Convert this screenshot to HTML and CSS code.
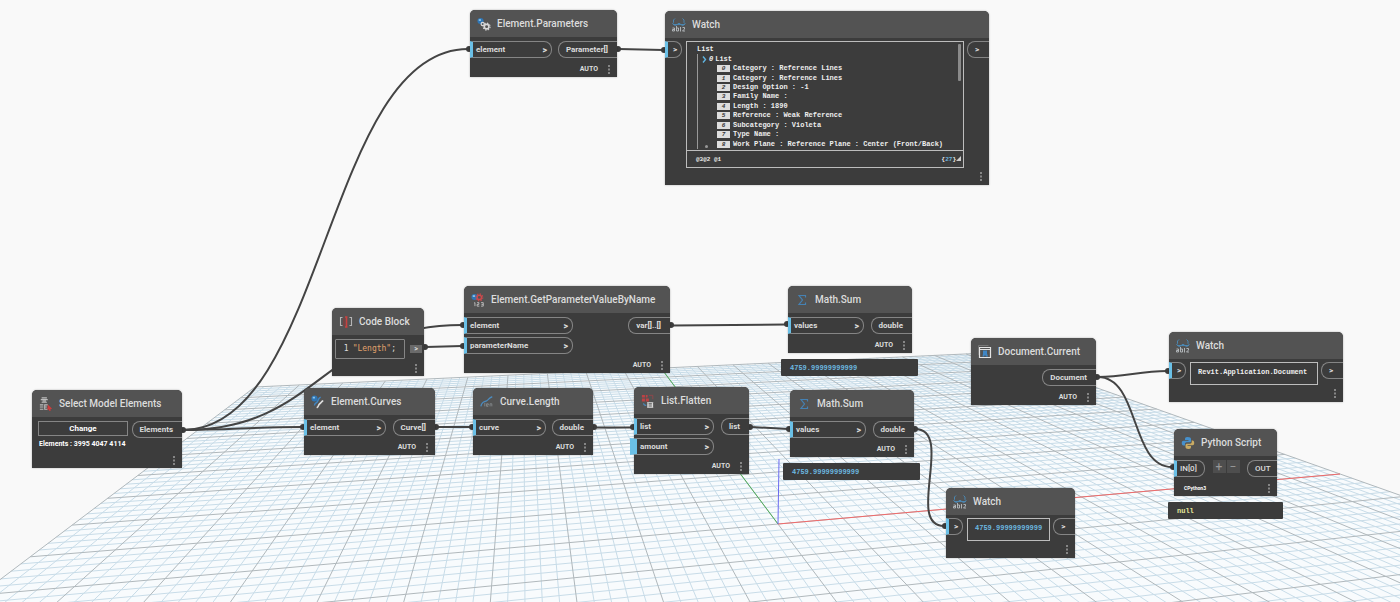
FILE: index.html
```html
<!DOCTYPE html>
<html lang="en">
<head>
<meta charset="utf-8">
<title>Graph workspace</title>
<link rel="stylesheet" href="styles.css">
</head>
<body>
<svg class="defs" aria-hidden="true">
  <symbol id="dots" viewBox="0 0 2 9"><path d="M.5 0h1v2h-1zM.5 3.500h1v2h-1zM.5 7h1v2h-1z" fill="#d0d0d0"/></symbol>
  <symbol id="watch-icon" viewBox="0 0 14 14">
    <g fill="none" stroke="#4b86b0" stroke-width="1"><path d="M3 .5 1.500 2v2.500L.5 6M10.500.5 12 2v2.500L13.500 6M1 6.500h12M2 7q2.500 1.500 4-1.500h2q1.500 3 4 1.500"/></g>
    <g fill="none" stroke="#b9bec2" stroke-width=".9"><path d="M.5 10h2v3h-2v-1.500h2M4.500 8v5h2v-3h-2M8.500 9v4.500M10.500 9.500h2v1.500l-2 2h2.500"/></g>
  </symbol>
  <symbol id="sum-icon" viewBox="0 0 14 14"><path d="M10.500 4.500V2.500H4l3.500 4.500L4 11.500h6.500v-2" fill="none" stroke="#4581b3" stroke-width="1.200"/></symbol>
</svg>
<main class="workspace">
  <svg class="scene" aria-hidden="true">
    <path id="floor" class="floor"/>
    <path id="minor" class="minor"/>
    <path id="major" class="major"/>
    <path class="axis-x" d="M778 524 1340 474"/>
    <path class="axis-y" d="M778 524 661 368"/>
    <path class="axis-z" d="M778 524 779 459"/>
    <g class="wires">
      <path d="M183 430C325 430 326 49 468 49"/>
      <path d="M183 430C322 430 322 325 462 325"/>
      <path d="M183 430C230 430 250 427 302 427"/>
      <path d="M426 347 462 346M619 49 663 50M672 325.500 786 324.500M437 427h34M595 427.500h37M751 427 788 429"/>
      <path d="M915 429C955 429 905 526 944 526"/>
      <path d="M1098 377C1125 377 1140 371 1167 371"/>
      <path d="M1098 377C1140 377 1130 467 1172 467"/>
    </g>
    <g class="ends">
      <circle cx="183" cy="430" r="3"/><circle cx="469" cy="49" r="3"/><circle cx="618" cy="49" r="3"/><circle cx="664" cy="50" r="3"/>
      <circle cx="303" cy="427" r="3"/><circle cx="436" cy="427" r="3"/><circle cx="472" cy="427" r="3"/><circle cx="594" cy="427" r="3"/>
      <circle cx="633" cy="427" r="3"/><circle cx="750" cy="427" r="3"/><circle cx="789" cy="429" r="3"/><circle cx="915" cy="429" r="3"/>
      <circle cx="945" cy="526" r="3"/><circle cx="425" cy="347" r="3"/><circle cx="463" cy="325" r="3"/><circle cx="463" cy="346" r="3"/>
      <circle cx="671" cy="325" r="3"/><circle cx="787" cy="324" r="3"/><circle cx="1097" cy="377" r="3"/><circle cx="1168" cy="371" r="3"/><circle cx="1173" cy="467" r="3"/>
    </g>
  </svg>

  <section class="item at-params">
    <div class="node">
      <header class="head"><svg class="icon" viewBox="0 0 16 16"><circle cx="4" cy="4.500" r="3.500" fill="#2f76b5"/><path d="M2 2.500h2.500v2H2z" fill="#8cc4ea"/><circle cx="6.500" cy="8" r="1.800" fill="none" stroke="#d8d8d8" stroke-width="1.400"/><circle cx="11" cy="11" r="2.600" fill="none" stroke="#d8d8d8" stroke-width="1.800"/><circle cx="11" cy="11" r="4" fill="none" stroke="#d8d8d8" stroke-width="1.200" stroke-dasharray="1.600 1.540"/></svg><h2>Element.Parameters</h2></header>
      <div class="ports"><div class="ins"><div class="in"><span>element</span><b>&gt;</b></div></div><div class="out">Parameter[]</div></div>
      <footer class="foot"><span>AUTO</span><button class="more" aria-label="Node menu"><svg><use href="#dots"/></svg></button></footer>
    </div>
  </section>

  <section class="item at-watch-list">
    <div class="node">
      <header class="head"><svg class="icon"><use href="#watch-icon"/></svg><h2>Watch</h2></header>
      <div class="ports watching"><div class="in stub"><b>&gt;</b></div>
        <div class="box tree">
          <div class="rows">
            <div>List</div>
            <div class="sub"><svg class="chev" viewBox="0 0 5 7"><path d="M1 .5l2.500 3-2.500 3" fill="none" stroke="#5fb4e0" stroke-width="1.400"/></svg><i>0</i>List</div>
            <div class="leaf"><i>0</i>Category : Reference Lines</div>
            <div class="leaf"><i>1</i>Category : Reference Lines</div>
            <div class="leaf"><i>2</i>Design Option : -1</div>
            <div class="leaf"><i>3</i>Family Name :</div>
            <div class="leaf"><i>4</i>Length : 1890</div>
            <div class="leaf"><i>5</i>Reference : Weak Reference</div>
            <div class="leaf"><i>6</i>Subcategory : Violeta</div>
            <div class="leaf"><i>7</i>Type Name :</div>
            <div class="leaf last"><i>8</i>Work Plane : Reference Plane : Center (Front/Back)</div>
          </div>
          <div class="levels"><span>@3@2 @1</span><span>{<em>27</em>}<svg class="grip" viewBox="0 0 5 5"><path d="M5 0v5H0z" fill="#ccc"/></svg></span></div>
        </div>
        <div class="out stub"><b>&gt;</b></div></div>
      <footer class="foot"><button class="more" aria-label="Node menu"><svg><use href="#dots"/></svg></button></footer>
    </div>
  </section>

  <section class="item at-code">
    <div class="node">
      <header class="head"><svg class="icon" viewBox="0 0 14 14"><g fill="none" stroke-width="1.100"><path d="M3.500 2.500h-2v8h2M10.500 2.500h2v8h-2" stroke="#b5b5b5"/><path d="M6 2h2.500M6 12h2.500M7.500 2v10" stroke="#c8413f" stroke-width="1.600"/><path d="M5 3v8" stroke="#8c3a39"/></g></svg><h2>Code Block</h2></header>
      <div class="ports coding"><div class="code"><span>1</span><code><q>"Length"</q>;</code></div><div class="tab">&gt;</div></div>
      <footer class="foot"><button class="more" aria-label="Node menu"><svg><use href="#dots"/></svg></button></footer>
    </div>
  </section>

  <section class="item at-getparam">
    <div class="node">
      <header class="head"><svg class="icon" viewBox="0 0 16 16"><circle cx="4" cy="4.500" r="3.500" fill="#2f76b5"/><path d="M2 2.500h2.500v2H2z" fill="#8cc4ea"/><circle cx="9.500" cy="5" r="2.500" fill="none" stroke="#d0494c" stroke-width="1.600"/><circle cx="9.500" cy="5" r="4" fill="none" stroke="#d0494c" stroke-width="1.200" stroke-dasharray="1.600 1.540"/><path d="M4.500 11v4M3.500 11.500l1-.5M7 11h2v2H7v2h2.500M11.500 11h2.500v4h-2.500M12 13h2" fill="none" stroke="#c4c4c4"/></svg><h2>Element.GetParameterValueByName</h2></header>
      <div class="ports"><div class="ins"><div class="in"><span>element</span><b>&gt;</b></div><div class="in"><span>parameterName</span><b>&gt;</b></div></div><div class="out">var[]..[]</div></div>
      <footer class="foot"><span>AUTO</span><button class="more" aria-label="Node menu"><svg><use href="#dots"/></svg></button></footer>
    </div>
  </section>

  <section class="item at-sum-a">
    <div class="node">
      <header class="head"><svg class="icon"><use href="#sum-icon"/></svg><h2>Math.Sum</h2></header>
      <div class="ports"><div class="ins"><div class="in"><span>values</span><b>&gt;</b></div></div><div class="out">double</div></div>
      <footer class="foot"><span>AUTO</span><button class="more" aria-label="Node menu"><svg><use href="#dots"/></svg></button></footer>
    </div>
    <output class="bubble">4759.99999999999</output>
  </section>

  <section class="item at-sum-b">
    <div class="node">
      <header class="head"><svg class="icon"><use href="#sum-icon"/></svg><h2>Math.Sum</h2></header>
      <div class="ports"><div class="ins"><div class="in"><span>values</span><b>&gt;</b></div></div><div class="out">double</div></div>
      <footer class="foot"><span>AUTO</span><button class="more" aria-label="Node menu"><svg><use href="#dots"/></svg></button></footer>
    </div>
    <output class="bubble">4759.99999999999</output>
  </section>

  <section class="item at-select">
    <div class="node">
      <header class="head"><svg class="icon" viewBox="0 0 16 16"><g fill="none" stroke="#bdbdbd" stroke-width="1.200"><path d="M3 1h6M2 3h8M4 4.500h4M3 6h6M1 9h4M1 11.500h4M1 14h4M10 9H6.500v5H10M6.500 11.500H9"/></g><path d="M10 8.500l5 5-2 .3.500 1.700-1.500.5-1-2-1.500 1z" fill="#cf3c3c"/></svg><h2>Select Model Elements</h2></header>
      <div class="ports"><div class="pick"><button class="change">Change</button><p>Elements : 3995 4047 4114</p></div><div class="out">Elements</div></div>
      <footer class="foot"><button class="more" aria-label="Node menu"><svg><use href="#dots"/></svg></button></footer>
    </div>
  </section>

  <section class="item at-curves">
    <div class="node">
      <header class="head"><svg class="icon" viewBox="0 0 16 16"><circle cx="4" cy="4" r="3.500" fill="#2f76b5"/><path d="M2 2h2.500v2H2z" fill="#8cc4ea"/><path d="M4 12c0-3 1.500-2 3-4s1-4 4-5.500" fill="none" stroke="#3f86c4" stroke-width="1.600"/><path d="M6.500 14.500c2.500-1 1.500-3 3.500-4.500s2-3 4-3.500" fill="none" stroke="#e0e0e0" stroke-width="1.800"/></svg><h2>Element.Curves</h2></header>
      <div class="ports"><div class="ins"><div class="in"><span>element</span><b>&gt;</b></div></div><div class="out">Curve[]</div></div>
      <footer class="foot"><span>AUTO</span><button class="more" aria-label="Node menu"><svg><use href="#dots"/></svg></button></footer>
    </div>
  </section>

  <section class="item at-length">
    <div class="node">
      <header class="head"><svg class="icon" viewBox="0 0 16 16"><path d="M1 13c1-5 3-5 6-6s3-4 7-5" fill="none" stroke="#4b8cc0" stroke-width="1.500"/><path d="M5.500 9v4M7.500 11.500h2v-1.500h-2v3h2M11.500 13v-3h2v3" fill="none" stroke="#8a8f93" stroke-width=".9"/></svg><h2>Curve.Length</h2></header>
      <div class="ports"><div class="ins"><div class="in"><span>curve</span><b>&gt;</b></div></div><div class="out">double</div></div>
      <footer class="foot"><span>AUTO</span><button class="more" aria-label="Node menu"><svg><use href="#dots"/></svg></button></footer>
    </div>
  </section>

  <section class="item at-flatten">
    <div class="node">
      <header class="head"><svg class="icon" viewBox="0 0 16 16"><path d="M1 1h3.500v3H1zM5.500 1h2v3h-2zM1 5h3.500v3.500H1zM5.500 5H9v3.500H5.500z" fill="#bd4245"/><path d="M9 1.500h4.500V6" fill="none" stroke="#97474a"/><path d="M3 10.500c0 2 1 2.500 3 2.500" fill="none" stroke="#4b8cc0" stroke-width="1.200"/><path d="M7 10h7M7 12.500h7M7 15h7M8 9.500v6M13 9.500v6" stroke="#e0e0e0" stroke-width="1.200"/></svg><h2>List.Flatten</h2></header>
      <div class="ports"><div class="ins"><div class="in"><span>list</span><b>&gt;</b></div><div class="in optional"><span>amount</span><b>&gt;</b></div></div><div class="out">list</div></div>
      <footer class="foot"><span>AUTO</span><button class="more" aria-label="Node menu"><svg><use href="#dots"/></svg></button></footer>
    </div>
  </section>

  <section class="item at-document">
    <div class="node">
      <header class="head"><svg class="icon" viewBox="0 0 14 14"><path d="M1.500 2.500h11v10h-11zM1.500 4.500h11" fill="none" stroke="#e4e4e4" stroke-width="1.200"/><path d="M.5 10V.5h10" fill="none" stroke="#777"/><path d="M5 5.500h4v3l1 3H8l-1-1.500-1 1.500H4.500l.5-3z" fill="#3f86c4"/></svg><h2>Document.Current</h2></header>
      <div class="ports"><div class="ins"></div><div class="out">Document</div></div>
      <footer class="foot"><span>AUTO</span><button class="more" aria-label="Node menu"><svg><use href="#dots"/></svg></button></footer>
    </div>
  </section>

  <section class="item at-watch-doc">
    <div class="node">
      <header class="head"><svg class="icon"><use href="#watch-icon"/></svg><h2>Watch</h2></header>
      <div class="ports watching"><div class="in stub"><b>&gt;</b></div><div class="box value">Revit.Application.Document</div><div class="out stub"><b>&gt;</b></div></div>
      <footer class="foot"><button class="more" aria-label="Node menu"><svg><use href="#dots"/></svg></button></footer>
    </div>
  </section>

  <section class="item at-python">
    <div class="node">
      <header class="head"><svg class="icon" viewBox="0 0 14 14"><path d="M6.500 1C4 1 4 2 4 4h3.500v.7H2.500C1 4.700.8 6 .8 7.200S1.200 9.500 2.500 9.500H4V8c0-1 .8-1.700 1.700-1.700h3c.8 0 1.300-.6 1.300-1.400V3c0-1.300-1-2-3.500-2z" fill="#4690cc"/><path d="M7.500 13c2.500 0 2.500-1 2.500-3H6.500v-.7h5c1.500 0 1.700-1.300 1.700-2.500S12.800 4.500 11.500 4.500H10.700V6c0 1-.8 1.700-1.700 1.700H6C5.200 7.700 4.500 8.300 4.500 9.100V11c0 1.300 1 2 3 2z" fill="#c9ab63"/></svg><h2>Python Script</h2></header>
      <div class="ports"><div class="in caps">IN[0]</div><div class="steps"><button aria-label="Add input">+</button><button aria-label="Remove input">−</button></div><div class="out caps">OUT</div></div>
      <footer class="foot"><small>CPython3</small><button class="more" aria-label="Node menu"><svg><use href="#dots"/></svg></button></footer>
    </div>
    <output class="bubble null">null</output>
  </section>

  <section class="item at-watch-sum">
    <div class="node">
      <header class="head"><svg class="icon"><use href="#watch-icon"/></svg><h2>Watch</h2></header>
      <div class="ports watching"><div class="in stub"><b>&gt;</b></div><div class="box value number">4759.99999999999</div><div class="out stub"><b>&gt;</b></div></div>
      <footer class="foot"><button class="more" aria-label="Node menu"><svg><use href="#dots"/></svg></button></footer>
    </div>
  </section>
</main>
<script src="grid.js"></script>
</body>
</html>
```
FILE: grid.js
```js
// Perspective projection of the ground plane; u and v run from -1 to 1.
const depth = (u, v) => 1 + 0.1737 * u + 0.849 * v;
const project = (u, v) => {
  const w = depth(u, v);
  return ((794.8 * u + 443.9 * v + 778) / w).toFixed(1) + ' ' +
         ((32.3 * u + 156.7 * v + 524) / w).toFixed(1);
};

const NEAR = 0.3;
const minor = [];
const major = [];

for (let i = -50; i <= 50; i++) {
  const t = i / 50;
  const list = i % 5 === 0 ? major : minor;
  const vNear = Math.max(-1, (NEAR - 1 - 0.1737 * t) / 0.849);
  list.push('M' + project(t, vNear) + 'L' + project(t, 1));
  const uNear = Math.max(-1, (NEAR - 1 - 0.849 * t) / 0.1737);
  if (uNear < 1) list.push('M' + project(uNear, t) + 'L' + project(1, t));
}

document.getElementById('minor').setAttribute('d', minor.join(''));
document.getElementById('major').setAttribute('d', major.join(''));
document.getElementById('floor').setAttribute('d',
  'M' + [project(-1, 1), project(1, 1), project(1, -0.6), project(-1, -0.6)].join('L') + 'Z');
```
FILE: styles.css
```css
* { box-sizing: border-box; }
body { margin: 0; background: #f9f9f9; font-family: Roboto, "Liberation Sans", sans-serif; }
h2, p { margin: 0; }
button { font: inherit; color: inherit; background: none; border: 0; padding: 0; }
.defs { position: absolute; width: 0; height: 0; }

.workspace { position: relative; min-height: 100vh; overflow: hidden; }
.scene { position: absolute; inset: 0; width: 100%; height: 100%; }
.floor { fill: #f8fbfd; }
.minor, .major { fill: none; stroke-width: 1; }
.minor { stroke: #c8dce8; }
.major { stroke: #b0b8bc; }
.axis-x { stroke: #f06a6a; }
.axis-y { stroke: #4fae5a; }
.axis-z { stroke: #6a6af0; }
.wires { fill: none; stroke: #444; stroke-width: 2; }
.ends { fill: #3c3c3c; }

.item { position: absolute; }
.node { background: #3c3c3c; color: #dcdcdc; border-radius: 5px 5px 0 0; box-shadow: 0 0 2px #0005; }
.head { display: flex; align-items: center; gap: 6px; height: 27px; padding-left: 7px; background: #535353; border-radius: 5px 5px 0 0; }
.head h2 { font-size: 10px; line-height: 16px; font-weight: 500; white-space: nowrap; }
.icon { width: 14px; height: 14px; flex: none; }

.ports { display: flex; justify-content: space-between; align-items: flex-start; padding-top: 4px; font-size: 8px; line-height: 10px; font-weight: 700; }
.ins { display: grid; gap: 3px; width: var(--in); }
.in, .out { display: flex; align-items: center; justify-content: space-between; height: 17px; border: 1px solid #858585; white-space: nowrap; }
.in { border-left: 3px solid #6ac0e7; border-radius: 0 8px 8px 0; padding: 0 4px 0 3px; }
.ins b { font-size: 9px; }
.optional { margin-left: -4px; border-left-width: 7px; }
.out { border-right: 0; border-radius: 8px 0 0 8px; padding: 0 9px 0 7px; }
.stub { width: 17px; padding: 0 5px; }
.in.stub { margin-right: 1px; }
.out.stub { width: 22px; padding: 0 7px; }
.foot { display: flex; align-items: center; justify-content: flex-end; gap: 10px; height: 19px; padding: 3px 7px 0 10px; font-size: 7px; font-weight: 700; line-height: 10px; }
.more { display: flex; }
.more svg { width: 2px; height: 9px; }

.watching { gap: 3px; padding-top: 3px; }
.watching + .foot { height: 17px; padding-top: 0; }
.box { flex: 1; border: 1px solid #bdbdbd; font: 700 7px/9px "Liberation Mono", monospace; color: #eee; white-space: nowrap; }
.value { height: 23px; padding: 5px 7px; }
.number { color: #6cb9e0; }
.tree { position: relative; }
.tree::after { content: ""; position: absolute; right: 2px; top: 2px; width: 3px; height: 37px; background: #8a8a8a; border-radius: 1px; }
.rows { display: grid; grid-auto-rows: 1fr; align-items: center; height: 109px; padding: 3px 0 1px 10px; border-bottom: 1px solid #bdbdbd; }
.sub, .leaf { display: flex; align-items: center; height: 100%; border-left: 1px solid #999; }
.sub { padding-left: 4px; gap: 2px; }
.leaf { padding-left: 19px; gap: 3px; }
.leaf i { width: 13px; height: 7px; background: #ddd; color: #333; text-align: center; line-height: 7px; font-size: 6px; }
.last { position: relative; }
.last::before { content: ""; position: absolute; left: 7px; bottom: 1px; width: 3px; height: 3px; border-radius: 50%; background: #999; }
.chev { width: 5px; height: 7px; }
.levels { display: flex; justify-content: space-between; align-items: center; height: 16px; padding: 0 2px 0 9px; font-size: 6px; }
.levels em { color: #6cb9e0; font-style: normal; }
.grip { width: 5px; height: 5px; }

.coding { padding: 4px 2px 0 3px; align-items: center; }
.code { display: flex; align-items: center; justify-content: flex-end; gap: 4px; width: 70px; height: 20px; padding-right: 8px; border: 1px solid #858585; border-radius: 1px; font: 400 8px/10px "DejaVu Sans Mono", monospace; }
.code code { font: inherit; }
.code q { quotes: none; color: #e0a26c; }
.tab { width: 12px; height: 8px; background: #6a6a6a; text-align: center; font-size: 7px; line-height: 8px; }

.pick { display: grid; gap: 3px; padding-left: 6px; width: 96px; }
.change { height: 15px; border: 1px solid #858585; color: #fff; }
.pick p { color: #fff; font-size: 7px; padding-left: 1px; white-space: nowrap; }
.caps { font-weight: 500; }
.in.caps { width: 31px; }
.out.caps { width: 30px; }
.steps { display: flex; gap: 1px; }
.steps button { width: 13px; height: 13px; background: #4e4e4e; color: #999; font-size: 12px; font-weight: 400; }
.foot small { margin-right: auto; font-size: 5px; color: #fff; }

.bubble { display: block; margin: 6px -6px 0 -7px; padding: 5px 9px 3px; background: #3c3c3c; border-radius: 1px; color: #6cb9e0; font: 700 7px/9px "Liberation Mono", monospace; }
.null { margin-left: -6px; color: #e6e89a; }

.at-params { left: 470px; top: 10px; width: 147px; --in: 82px; }
.at-watch-list { left: 665px; top: 11px; width: 324px; }
.at-code { left: 332px; top: 308px; width: 92px; }
.at-code .foot { height: 17px; padding-top: 2px; }
.at-getparam { left: 464px; top: 286px; width: 206px; --in: 109px; }
.at-sum-a { left: 788px; top: 286px; width: 124px; --in: 76px; }
.at-sum-b { left: 790px; top: 390px; width: 124px; --in: 76px; }
.at-select { left: 32px; top: 390px; width: 150px; }
.at-curves { left: 304px; top: 388px; width: 131px; --in: 82px; }
.at-length { left: 473px; top: 388px; width: 120px; --in: 73px; }
.at-flatten { left: 634px; top: 387px; width: 115px; --in: 80px; }
.at-document { left: 971px; top: 338px; width: 125px; }
.at-watch-doc { left: 1169px; top: 332px; width: 174px; }
.at-python { left: 1174px; top: 429px; width: 103px; }
.at-watch-sum { left: 946px; top: 488px; width: 129px; }
```
